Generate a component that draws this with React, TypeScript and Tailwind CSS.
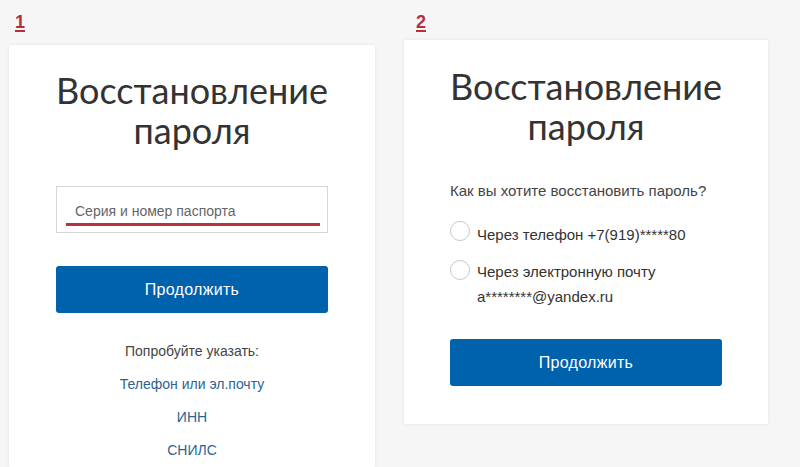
import React from 'react';

const heading = "font-['Lato','Noto_Sans',sans-serif] text-[36px] leading-[40px] text-[#333] text-center";
const body = "font-['Liberation_Sans',Arial,sans-serif]";

const StepLabel: React.FC<{ n: string }> = ({ n }) => (
  <span className={`${body} text-[18px] font-bold text-[#b5303c] underline underline-offset-2 decoration-2`}>{n}</span>
);

const SubmitButton: React.FC = () => (
  <button className={`${body} w-full h-[47px] rounded-[3px] bg-[#0061ad] text-white text-[16px] tracking-[0.3px]`}>
    Продолжить
  </button>
);

const Radio: React.FC = () => (
  <span className="block shrink-0 w-[20px] h-[20px] rounded-full border border-[#c9c9c9] bg-white" />
);

export default function App() {
  return (
    <div className="w-[800px] h-[467px] bg-[#f6f6f6] flex overflow-hidden">
      {/* step 1 */}
      <div className="ml-[9px] w-[366px] flex flex-col">
        <div className="h-[45px] pt-[9px] pl-[6px]">
          <StepLabel n="1" />
        </div>
        <div className="flex-1 bg-white shadow-[0_0_4px_rgba(0,0,0,0.08)] px-[47px] pt-[25px] flex flex-col">
          <h1 className={heading}>
            Восстановление
            <br />
            пароля
          </h1>
          <div className="relative mt-[36px] h-[47px] border border-[#d6d6d6] flex items-center pl-[18px]">
            <span className={`${body} text-[14px] text-[#666] mt-[4px]`}>Серия и номер паспорта</span>
            <span className="absolute left-[9px] top-[36px] w-[254px] h-[3px] bg-[#b8323f]" />
          </div>
          <div className="mt-[33px]">
            <SubmitButton />
          </div>
          <div className={`${body} mt-[29px] flex flex-col items-center gap-[14px] text-[14px] leading-[19px]`}>
            <span className="text-[#444]">Попробуйте указать:</span>
            <span className="text-[#2d6391]">Телефон или эл.почту</span>
            <span className="text-[#2d6391]">ИНН</span>
            <span className="text-[#2d6391]">СНИЛС</span>
          </div>
        </div>
      </div>

      {/* step 2 */}
      <div className="ml-[29px] w-[364px] flex flex-col">
        <div className="h-[40px] pt-[9px] pl-[12px]">
          <StepLabel n="2" />
        </div>
        <div className="h-[384px] bg-white shadow-[0_0_4px_rgba(0,0,0,0.08)] px-[46px] pt-[26px] flex flex-col">
          <h1 className={heading}>
            Восстановление
            <br />
            пароля
          </h1>
          <p className={`${body} mt-[35px] text-[15px] leading-[19px] text-[#444]`}>Как вы хотите восстановить пароль?</p>
          <div className={`${body} mt-[22px] flex flex-col gap-[12px] text-[15px] leading-[25px] text-[#333]`}>
            <label className="flex items-start gap-[7px]">
              <span className="mt-[-1px]"><Radio /></span>
              <span>Через телефон +7(919)*****80</span>
            </label>
            <label className="flex items-start gap-[7px]">
              <span className="mt-[1px]"><Radio /></span>
              <span>
                Через электронную почту
                <br />
                a********@yandex.ru
              </span>
            </label>
          </div>
          <div className="mt-[30px]">
            <SubmitButton />
          </div>
        </div>
      </div>
    </div>
  );
}
